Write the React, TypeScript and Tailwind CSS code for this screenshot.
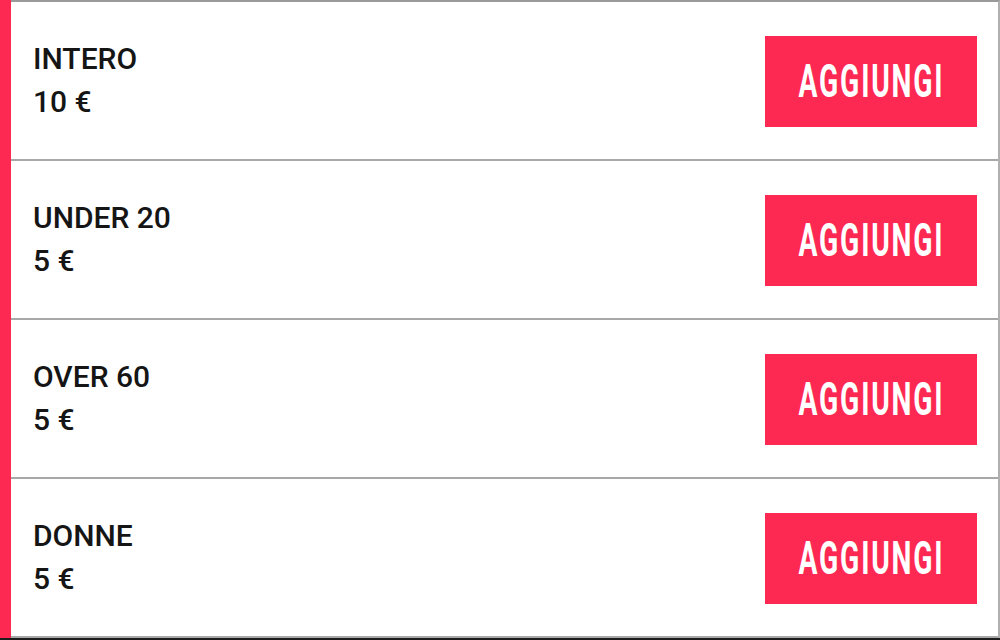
import React from 'react';

const tickets = [
  { name: 'INTERO', price: '10 €' },
  { name: 'UNDER 20', price: '5 €' },
  { name: 'OVER 60', price: '5 €' },
  { name: 'DONNE', price: '5 €' },
];

const TicketRow: React.FC<{ name: string; price: string }> = ({ name, price }) => (
  <div className="h-[159px] border-b-2 border-[#a8a8a8] flex items-center justify-between pl-[22px] pr-[21px]">
    <div className="flex flex-col text-[30px] leading-[43px] font-medium text-[#151515] pb-[1px]">
      <span>{name}</span>
      <span>{price}</span>
    </div>
    <button className="w-[212px] h-[91px] mt-[2px] bg-[#fe2953] flex items-center justify-center">
      <span className="text-white text-[47px] font-bold tracking-[3px] scale-x-[0.6] inline-block">
        AGGIUNGI
      </span>
    </button>
  </div>
);

const App: React.FC = () => {
  return (
    <div className="w-[1000px] h-[640px] bg-[#1c1c1c] flex" style={{ fontFamily: 'Roboto, "Liberation Sans", sans-serif' }}>
      <div className="w-[11px] h-[638px] bg-[#fe2953]" />
      <div className="flex-1 h-[638px] bg-white border-t-2 border-[#9a9a9a] border-r-2 border-r-[#b0b0b0] flex flex-col">
        {tickets.map(t => (
          <TicketRow key={t.name} name={t.name} price={t.price} />
        ))}
      </div>
    </div>
  );
};

export default App;
